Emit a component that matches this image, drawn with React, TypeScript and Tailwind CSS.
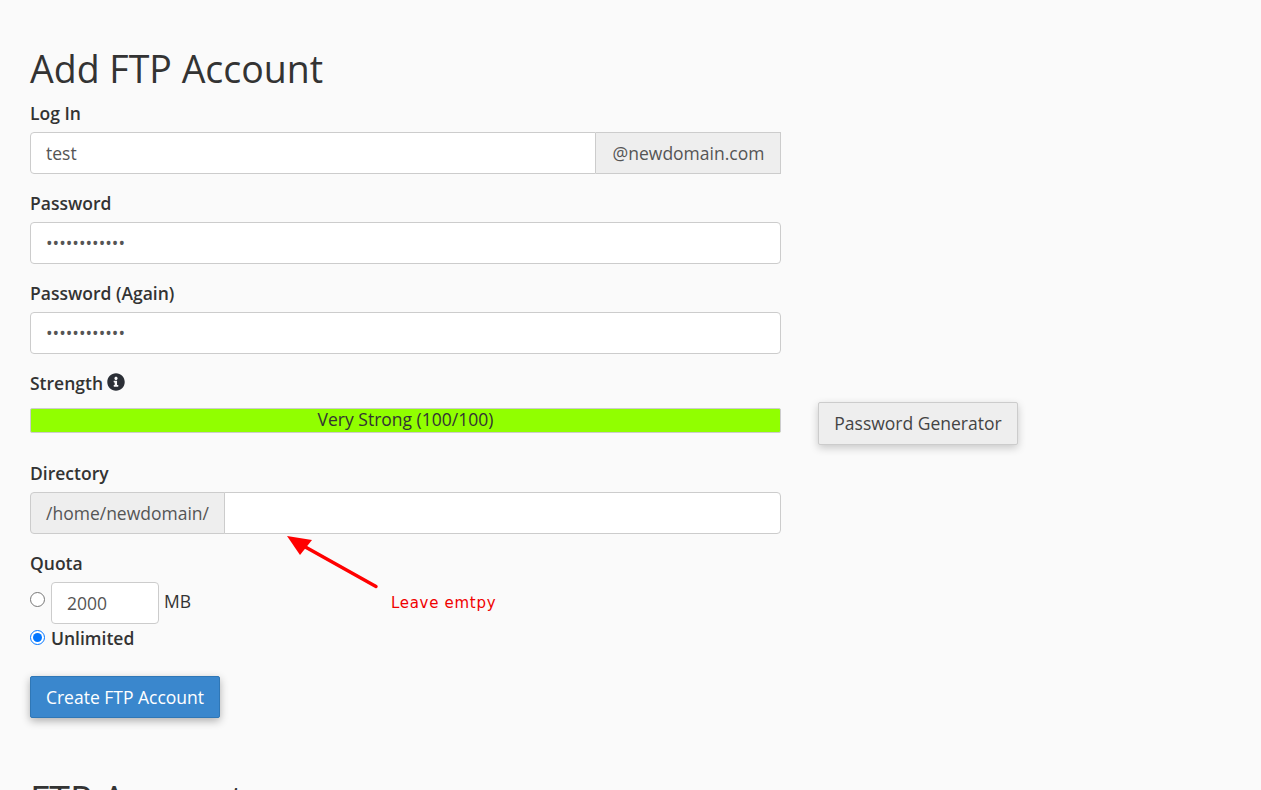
const labelCls = "block text-[17.5px] leading-[24px] font-semibold text-[#333333] mb-[7px]";
const inputCls =
  "block h-[42px] w-full border border-[#cccccc] bg-white px-[15px] text-[17.5px] text-[#555555] outline-none";

function InfoIcon() {
  return (
    <svg viewBox="0 0 512 512" className="h-[18px] w-[18px] -translate-y-px fill-[#2b2f36]">
      <path d="M256 8C119 8 8 119 8 256s111 248 248 248 248-111 248-248S393 8 256 8zm0 100c25 0 45 20 45 45s-20 45-45 45-45-20-45-45 20-45 45-45zm66 270c0 7-5 12-12 12H202c-7 0-12-5-12-12v-26c0-7 5-12 12-12h16v-72h-16c-7 0-12-5-12-12v-26c0-7 5-12 12-12h72c7 0 12 5 12 12v110h24c7 0 12 5 12 12v26z" />
    </svg>
  );
}

function Field({ label, children }: { label: string; children: React.ReactNode }) {
  return (
    <div className="mb-[17px]">
      <label className={labelCls}>{label}</label>
      {children}
    </div>
  );
}

export default function App() {
  return (
    <div className="relative h-[790px] overflow-hidden bg-[#fafafa] pl-[30px] pt-[43px] font-['Open_Sans',sans-serif] text-[#333333]">
      <h1 className="mb-[6px] text-[37.5px] leading-[52px] font-normal text-[#333333]">Add FTP Account</h1>

      <div className="flex items-start">
        <form className="w-[751px]">
          <Field label="Log In">
            <div className="flex">
              <input readOnly value="test" className={`${inputCls} rounded-l-[4px] flex-1 min-w-0`} />
              <span className="flex h-[42px] w-[185px] items-center justify-center border border-l-0 border-[#cccccc] bg-[#eeeeee] pl-px text-[17.5px] text-[#555555]">
                @newdomain.com
              </span>
            </div>
          </Field>
          <Field label="Password">
            <input readOnly type="password" value="abcdefghijkl" className={`${inputCls} rounded-[4px]`} />
          </Field>
          <Field label="Password (Again)">
            <input readOnly type="password" value="abcdefghijkl" className={`${inputCls} rounded-[4px]`} />
          </Field>

          <div className="mb-[28px]">
            <label className="mb-[13px] flex items-center gap-[4px] text-[17.5px] leading-[24px] font-semibold text-[#333333]">
              Strength <InfoIcon />
            </label>
            <div className="h-[25px] rounded-[2px] border border-[#cccccc] bg-[#91ff00] text-center text-[17.5px] leading-[20px] text-[#333333]">
              Very Strong (100/100)
            </div>
          </div>

          <Field label="Directory">
            <div className="flex">
              <span className="flex h-[42px] w-[195px] items-center justify-center rounded-l-[4px] border border-[#cccccc] bg-[#eeeeee] text-[17.5px] text-[#555555]">
                /home/newdomain/
              </span>
              <input readOnly className={`${inputCls} -ml-px rounded-r-[4px] flex-1 min-w-0`} />
            </div>
          </Field>

          <label className={labelCls}>Quota</label>
          <div className="flex items-center">
            <input readOnly type="radio" name="quota" className="m-0 mb-[8px] h-[15px] w-[15px]" />
            <input
              readOnly
              value="2000"
              className="ml-[6px] h-[42px] w-[108px] rounded-[4px] border border-[#cccccc] bg-white px-[15px] text-[17.5px] text-[#555555] outline-none"
            />
            <span className="ml-[5px] mb-[4px] text-[17.5px] text-[#333333]">MB</span>
          </div>
          <div className="mt-[2px] flex items-center">
            <input readOnly type="radio" name="quota" checked className="m-0 mb-[2px] h-[15px] w-[15px]" />
            <span className="ml-[6px] text-[17.5px] leading-[24px] font-semibold text-[#333333]">Unlimited</span>
          </div>

          <button
            type="button"
            className="mt-[26px] block h-[42px] w-[190px] rounded-[2px] border border-[#2f77b6] bg-[#3a87cd] text-[17.5px] text-white shadow-[0_3px_8px_rgba(0,0,0,0.3)]"
          >
            Create FTP Account
          </button>
        </form>

        <button
          type="button"
          className="ml-[37px] mt-[301px] h-[43px] w-[200px] rounded-[2px] border border-[#cccccc] bg-[#eeeeee] text-[17.5px] text-[#444444] shadow-[0_3px_8px_rgba(0,0,0,0.2)]"
        >
          Password Generator
        </button>
      </div>

      <h2 className="mt-[56px] text-[37.5px] leading-[52px] font-normal text-[#333333]">FTP Accounts</h2>

      {/* annotation drawn over the form */}
      <svg className="absolute left-[280px] top-[530px] h-[70px] w-[110px]" viewBox="0 0 110 70">
        <line x1="96" y1="56.5" x2="20" y2="14" stroke="#ff0000" strokeWidth="3.5" strokeLinecap="round" />
        <polygon points="7,6 32,10 20,25" fill="#ff0000" />
      </svg>
      <span className="absolute left-[391px] top-[592px] text-[15px] leading-[22px] tracking-[0.7px] text-[#f00000] font-['DejaVu_Sans',sans-serif]">
        Leave emtpy
      </span>
    </div>
  );
}
